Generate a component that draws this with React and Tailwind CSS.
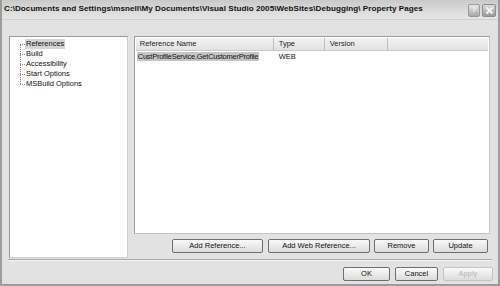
const FONT = { fontFamily: '"Liberation Sans", Arial, sans-serif' }

function Btn({ children, w, disabled }) {
  return (
    <div
      className={`h-[14px] flex items-center justify-center rounded-[2px] border text-[7.5px] leading-none bg-gradient-to-b from-[#fafafa] to-[#dcdcdc] ${
        disabled ? 'border-[#c4c4c4] text-[#b4b4b4]' : 'border-[#6e6e6e] text-[#111]'
      } ${w}`}
    >
      {children}
    </div>
  )
}

const TREE = ['References', 'Build', 'Accessibility', 'Start Options', 'MSBuild Options']

export default function App() {
  return (
    <div
      style={FONT}
      className="w-[500px] h-[286px] flex flex-col bg-[#e2e2e2] border-x-2 border-b-2 border-[#9c9c9c] overflow-hidden"
    >
      {/* Title bar */}
      <div className="h-[20px] -mx-[2px] flex items-center justify-between pl-[4px] pr-[4px] bg-gradient-to-b from-[#c9c9c9] via-[#d9d9d9] to-[#e6e6e6] border-b border-[#cfcfcf]">
        <span className="text-[8.1px] font-bold text-[#111] whitespace-nowrap tracking-[0.05px]">
          C:\Documents and Settings\msnell\My Documents\Visual Studio 2005\WebSites\Debugging\ Property Pages
        </span>
        <div className="flex items-center gap-[2px] mt-[1px]">
          <div className="w-[12px] h-[13px] rounded-[2px] border border-[#9a9a9a] bg-gradient-to-b from-[#e8e8e8] to-[#a8a8a8] flex items-center justify-center text-[8px] font-bold text-[#f4f4f4] leading-none">
            ?
          </div>
          <div className="w-[14px] h-[13px] rounded-[2px] border border-[#8c8c8c] bg-gradient-to-b from-[#dcdcdc] to-[#9a9a9a] flex items-center justify-center">
            <svg width="9" height="9" viewBox="0 0 9 9">
              <path d="M1.5 1.5 L7.5 7.5 M7.5 1.5 L1.5 7.5" stroke="#f6f6f6" strokeWidth="1.8" />
            </svg>
          </div>
        </div>
      </div>

      {/* Body */}
      <div className="flex pt-[16px] pl-[7px] pr-[8px]">
        {/* Left tree */}
        <div className="w-[119px] h-[222px] bg-white border border-t-[#9c9c9c] border-l-[#9c9c9c] border-r-[#cfcfcf] border-b-[#cfcfcf] pt-[2px] pl-[10px]">
          <div className="relative">
            <div className="absolute left-0 top-[5px] h-[40px] border-l border-dotted border-[#8a8a8a]" />
            {TREE.map((t, i) => (
              <div key={t} className="flex items-center h-[10px]">
                <div className="w-[5px] border-t border-dotted border-[#8a8a8a]" />
                <span
                  className={`text-[7.5px] leading-[10px] px-[1px] text-[#111] ${
                    i === 0 ? 'bg-[#d4d4d4]' : ''
                  }`}
                >
                  {t}
                </span>
              </div>
            ))}
          </div>
        </div>

        {/* Right side */}
        <div className="ml-[6px] w-[357px] flex flex-col">
          <div className="h-[198px] bg-white border border-t-[#9c9c9c] border-l-[#9c9c9c] border-r-[#c4c4c4] border-b-[#c4c4c4] p-[1px]">
            <div className="h-[13px] flex bg-gradient-to-b from-[#f2f2f2] to-[#e2e2e2] border-b border-[#c8c8c8] text-[7.5px] text-[#222]">
              <div className="w-[138px] pl-[4px] flex items-center border-r border-[#bdbdbd]">Reference Name</div>
              <div className="w-[51px] pl-[5px] flex items-center border-r border-[#bdbdbd]">Type</div>
              <div className="w-[63px] pl-[5px] flex items-center border-r border-[#bdbdbd]">Version</div>
            </div>
            <div className="flex h-[10px] items-center text-[7.5px] text-[#111] mt-[1px]">
              <div className="w-[138px] pl-[1px]">
                <span className="bg-[#c6c6c6] px-[1px] tracking-[-0.25px]">CustProfileService.GetCustomerProfile</span>
              </div>
              <div className="pl-[5px]">WEB</div>
            </div>
          </div>
          <div className="flex justify-end gap-[4px] mt-[5px] pr-[2px]">
            <Btn w="w-[91px]">Add Reference...</Btn>
            <Btn w="w-[102px] ml-[1px]">Add Web Reference...</Btn>
            <Btn w="w-[55px]">Remove</Btn>
            <Btn w="w-[55px]">Update</Btn>
          </div>
        </div>
      </div>

      {/* Separator */}
      <div className="mt-[1px] mx-[6px] border-t border-[#a8a8a8] border-b border-b-[#f4f4f4]" />

      {/* Bottom buttons */}
      <div className="flex justify-end gap-[5px] mt-[6px] pr-[5px]">
        <Btn w="w-[47px]">OK</Btn>
        <Btn w="w-[43px]">Cancel</Btn>
        <Btn w="w-[50px]" disabled>
          Apply
        </Btn>
      </div>
    </div>
  )
}
